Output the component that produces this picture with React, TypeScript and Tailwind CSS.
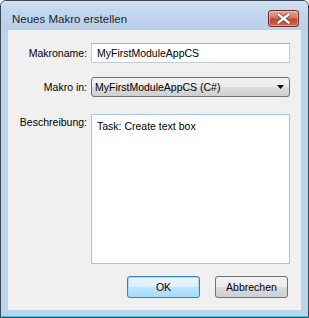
import React from 'react';

const btnGray =
  'bg-[linear-gradient(to_bottom,#f2f2f2_0%,#ebebeb_50%,#dddddd_50%,#cfcfcf_100%)] border border-[#707070]';
const btnBlue =
  'bg-[linear-gradient(to_bottom,#eaf6fd_0%,#d9f0fc_50%,#bee6fd_50%,#a7d9f5_100%)] border border-[#3c7fb1] shadow-[inset_0_0_0_1px_#9ee0f8]';

const CloseButton: React.FC = () => (
  <div className="w-[31px] h-[17px] mt-[9px] rounded-[3px] border border-[#6e2d25] bg-[linear-gradient(to_bottom,#e9a99c_0%,#d7705f_45%,#c3452f_55%,#cf6a50_100%)] flex items-center justify-center shadow-[inset_0_0_0_1px_rgba(255,220,210,0.45)]">
    <svg width="13" height="11" viewBox="0 0 13 11">
      <path d="M1.5 1.5 L11.5 9.5 M11.5 1.5 L1.5 9.5" stroke="#5a4a48" strokeWidth="4" strokeLinecap="square" />
      <path d="M1.5 1.5 L11.5 9.5 M11.5 1.5 L1.5 9.5" stroke="#ffffff" strokeWidth="2.4" strokeLinecap="square" />
    </svg>
  </div>
);

const App: React.FC = () => {
  return (
    <div className="w-[309px] h-[318px] bg-white font-['Liberation_Sans',Arial,sans-serif] text-black">
      <div className="w-[309px] h-[318px] border border-[#3b4656] rounded-t-[6px] bg-[#bcd3ec] flex flex-col overflow-hidden">
        {/* Title bar */}
        <div className="h-[29px] flex justify-between pl-[11px] pr-[9px] bg-[linear-gradient(to_bottom,#d3e1f2_0%,#c2d6ee_40%,#b9d0ea_100%)]">
          <span className="text-[11.5px] leading-[14px] pt-[11px] text-[#1e1e1e]">Neues Makro erstellen</span>
          <CloseButton />
        </div>

        {/* Client area */}
        <div className="mx-[7px] h-[280px] bg-[#f0f0f0] flex flex-col pt-[13px] text-[10.5px]">
          <div className="flex items-center h-[20px]">
            <span className="w-[79px] text-right leading-[20px]">Makroname:</span>
            <div className="ml-[4px] w-[199px] h-[20px] bg-white border border-[#c6ccd4] border-t-[#abb3bd] pl-[5px] leading-[18px]">
              MyFirstModuleAppCS
            </div>
          </div>

          <div className="flex items-center h-[20px] mt-[14px]">
            <span className="w-[79px] text-right leading-[20px]">Makro in:</span>
            <div className={`ml-[4px] w-[199px] h-[20px] rounded-[3px] ${btnGray} pl-[3px] pr-[5px] flex items-center justify-between`}>
              <span className="leading-[18px]">MyFirstModuleAppCS (C#)</span>
              <svg width="7" height="4" viewBox="0 0 7 4">
                <path d="M0 0 H7 L3.5 4 Z" fill="#000" />
              </svg>
            </div>
          </div>

          <div className="flex items-start mt-[17px]">
            <span className="w-[79px] text-right leading-[14px] mt-[1px]">Beschreibung:</span>
            <div className="ml-[4px] w-[199px] h-[150px] bg-white border border-[#a6c6e4] pl-[5px] pt-[4px] leading-[14px]">
              Task: Create text box
            </div>
          </div>

          <div className="flex justify-end gap-[15px] pr-[13px] mt-[12px]">
            <button className={`w-[73px] h-[22px] rounded-[3px] ${btnBlue} text-[10.5px] leading-[18px]`}>OK</button>
            <button className={`w-[73px] h-[22px] rounded-[3px] ${btnGray} text-[10.5px] leading-[18px]`}>Abbrechen</button>
          </div>
        </div>

        {/* Bottom frame */}
        <div className="flex-1 border-b border-[#46c3dc]" />
      </div>
    </div>
  );
};

export default App;
